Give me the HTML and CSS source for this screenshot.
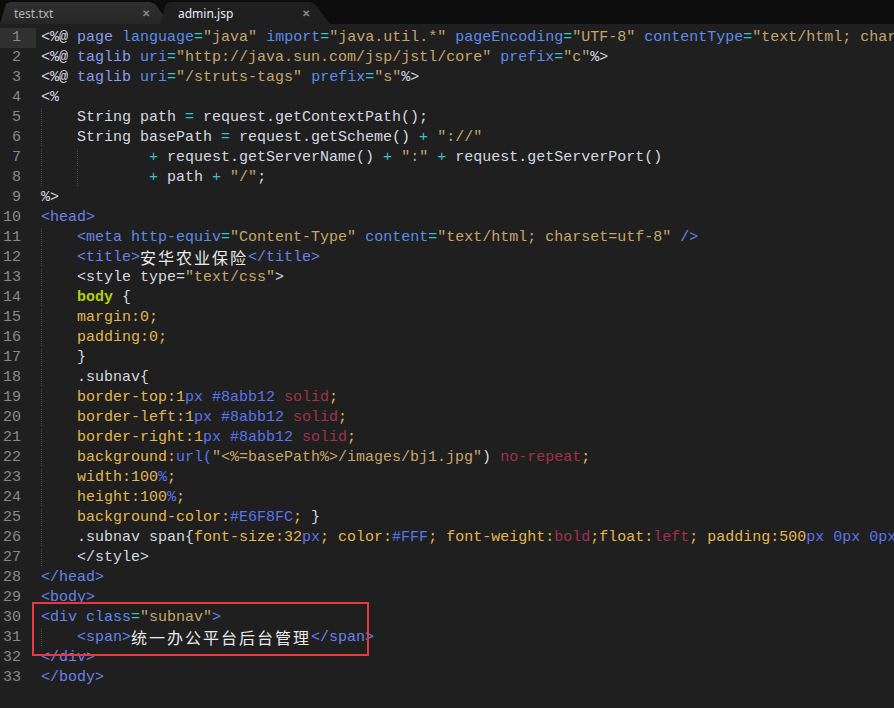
FILE: index.html
```html
<!DOCTYPE html>
<html lang="zh">
<head>
    <meta charset="UTF-8">
    <title>admin.jsp</title>
    <link rel="stylesheet" href="styles.css">
</head>
<body>

    <div class="tabbar">
        <div class="tab">
            <span class="tab-name">test.txt</span>
            <span class="tab-close">&#x2715;</span>
        </div>
        <div class="tab active">
            <span class="tab-name">admin.jsp</span>
            <span class="tab-close">&#x2715;</span>
        </div>
    </div>

    <div class="editor">
        <div class="line current"><span class="num">1</span><span class="code"><span class="p">&lt;%@</span> <span class="kw">page</span> <span class="at">language</span><span class="eq">=</span><span class="st">"java"</span> <span class="at">import</span><span class="eq">=</span><span class="st">"java.util.*"</span> <span class="at">pageEncoding</span><span class="eq">=</span><span class="st">"UTF-8"</span> <span class="at">contentType</span><span class="eq">=</span><span class="st">"text/html; charset=utf-8"</span><span class="p">%&gt;</span></span></div>
        <div class="line"><span class="num">2</span><span class="code"><span class="p">&lt;%@</span> <span class="kw">taglib</span> <span class="at">uri</span><span class="eq">=</span><span class="st">"http://java.sun.com/jsp/jstl/core"</span> <span class="at">prefix</span><span class="eq">=</span><span class="st">"c"</span><span class="p">%&gt;</span></span></div>
        <div class="line"><span class="num">3</span><span class="code"><span class="p">&lt;%@</span> <span class="kw">taglib</span> <span class="at">uri</span><span class="eq">=</span><span class="st">"/struts-tags"</span> <span class="at">prefix</span><span class="eq">=</span><span class="st">"s"</span><span class="p">%&gt;</span></span></div>
        <div class="line"><span class="num">4</span><span class="code"><span class="p">&lt;%</span></span></div>
        <div class="line"><span class="num">5</span><span class="code"><span class="ig">    </span><span class="p">String path </span><span class="eq">=</span><span class="p"> request.getContextPath();</span></span></div>
        <div class="line"><span class="num">6</span><span class="code"><span class="ig">    </span><span class="p">String basePath </span><span class="eq">=</span><span class="p"> request.getScheme() </span><span class="eq">+</span> <span class="st">"://"</span></span></div>
        <div class="line"><span class="num">7</span><span class="code"><span class="ig">    </span><span class="ig">    </span>    <span class="eq">+</span><span class="p"> request.getServerName() </span><span class="eq">+</span> <span class="st">":"</span> <span class="eq">+</span><span class="p"> request.getServerPort()</span></span></div>
        <div class="line"><span class="num">8</span><span class="code"><span class="ig">    </span><span class="ig">    </span>    <span class="eq">+</span><span class="p"> path </span><span class="eq">+</span> <span class="st">"/"</span><span class="p">;</span></span></div>
        <div class="line"><span class="num">9</span><span class="code"><span class="p">%&gt;</span></span></div>
        <div class="line"><span class="num">10</span><span class="code"><span class="tg">&lt;head&gt;</span></span></div>
        <div class="line"><span class="num">11</span><span class="code"><span class="ig">    </span><span class="tg">&lt;meta</span> <span class="at">http-equiv</span><span class="eq">=</span><span class="st">"Content-Type"</span> <span class="at">content</span><span class="eq">=</span><span class="st">"text/html; charset=utf-8"</span> <span class="tg">/&gt;</span></span></div>
        <div class="line"><span class="num">12</span><span class="code"><span class="ig">    </span><span class="tg">&lt;title&gt;</span><span class="cn">安华农业保险</span><span class="tg">&lt;/title&gt;</span></span></div>
        <div class="line"><span class="num">13</span><span class="code"><span class="ig">    </span><span class="p">&lt;style type=</span><span class="st">"text/css"</span><span class="p">&gt;</span></span></div>
        <div class="line"><span class="num">14</span><span class="code"><span class="ig">    </span><span class="sel">body</span> <span class="p">{</span></span></div>
        <div class="line"><span class="num">15</span><span class="code"><span class="ig">    </span><span class="pr">margin:0;</span></span></div>
        <div class="line"><span class="num">16</span><span class="code"><span class="ig">    </span><span class="pr">padding:0;</span></span></div>
        <div class="line"><span class="num">17</span><span class="code"><span class="ig">    </span><span class="p">}</span></span></div>
        <div class="line"><span class="num">18</span><span class="code"><span class="ig">    </span><span class="p">.subnav{</span></span></div>
        <div class="line"><span class="num">19</span><span class="code"><span class="ig">    </span><span class="pr">border-top:1</span><span class="un">px #8abb12</span> <span class="cv">solid</span><span class="pr">;</span></span></div>
        <div class="line"><span class="num">20</span><span class="code"><span class="ig">    </span><span class="pr">border-left:1</span><span class="un">px #8abb12</span> <span class="cv">solid</span><span class="pr">;</span></span></div>
        <div class="line"><span class="num">21</span><span class="code"><span class="ig">    </span><span class="pr">border-right:1</span><span class="un">px #8abb12</span> <span class="cv">solid</span><span class="pr">;</span></span></div>
        <div class="line"><span class="num">22</span><span class="code"><span class="ig">    </span><span class="pr">background:</span><span class="un">url(</span><span class="st">"&lt;%=basePath%&gt;/images/bj1.jpg"</span><span class="p">)</span> <span class="cv">no-repeat</span><span class="pr">;</span></span></div>
        <div class="line"><span class="num">23</span><span class="code"><span class="ig">    </span><span class="pr">width:100</span><span class="un">%</span><span class="pr">;</span></span></div>
        <div class="line"><span class="num">24</span><span class="code"><span class="ig">    </span><span class="pr">height:100</span><span class="un">%</span><span class="pr">;</span></span></div>
        <div class="line"><span class="num">25</span><span class="code"><span class="ig">    </span><span class="pr">background-color:</span><span class="un">#E6F8FC</span><span class="pr">;</span> <span class="p">}</span></span></div>
        <div class="line"><span class="num">26</span><span class="code"><span class="ig">    </span><span class="p">.subnav span{</span><span class="pr">font-size:32</span><span class="un">px</span><span class="pr">; color:</span><span class="un">#FFF</span><span class="pr">; font-weight:</span><span class="cv">bold</span><span class="pr">;float:</span><span class="cv">left</span><span class="pr">; padding:500</span><span class="un">px 0px 0px 40px</span><span class="pr">;</span></span></div>
        <div class="line"><span class="num">27</span><span class="code"><span class="ig">    </span><span class="p">&lt;/style&gt;</span></span></div>
        <div class="line"><span class="num">28</span><span class="code"><span class="tg">&lt;/head&gt;</span></span></div>
        <div class="line"><span class="num">29</span><span class="code"><span class="tg">&lt;body&gt;</span></span></div>
        <div class="line"><span class="num">30</span><span class="code"><span class="tg">&lt;div</span> <span class="at">class</span><span class="eq">=</span><span class="st">"subnav"</span><span class="tg">&gt;</span></span></div>
        <div class="line"><span class="num">31</span><span class="code"><span class="ig">    </span><span class="tg">&lt;span&gt;</span><span class="cn">统一办公平台后台管理</span><span class="tg">&lt;/span&gt;</span></span></div>
        <div class="line"><span class="num">32</span><span class="code"><span class="tg">&lt;/div&gt;</span></span></div>
        <div class="line"><span class="num">33</span><span class="code"><span class="tg">&lt;/body&gt;</span></span></div>

        <!-- annotation box drawn over lines 30-31 -->
        <div class="mark"></div>
    </div>

</body>
</html>
```

FILE: styles.css
```css
/* Base */
* {
    margin: 0;
    padding: 0;
    box-sizing: border-box;
}

body {
    width: 894px;
    height: 708px;
    overflow: hidden;
    background: #1f1f1f;
    font-family: "Liberation Mono", "DejaVu Sans Mono", "Noto Sans CJK SC", monospace;
}

/* Tab bar */
.tabbar {
    display: flex;
    height: 26px;
    padding-top: 2px;
    background: #0c0c0c;
    border-bottom: 2px solid #1f1f1f;
}

.tab {
    display: flex;
    align-items: center;
    justify-content: space-between;
    width: 172px;
    height: 22px;
    margin-right: -12px;
    padding: 0 22px 0 14px;
    background: linear-gradient(#303030, #262626);
    clip-path: polygon(0 100%, 6px 2px, 10px 0, 150px 0, 155px 2px, 170px 100%);
    font-family: "Noto Sans", "Open Sans", sans-serif;
    font-size: 12px;
    color: #b4b4b4;
}

.tab.active {
    padding-left: 18px;
    background: #1f1f1f;
    color: #e8eefc;
}

.tab-close {
    font-size: 10px;
    font-weight: bold;
    color: #8a8a8a;
}

/* Editor */
.editor {
    position: relative;
    padding-top: 2px;
}

.line {
    display: flex;
    height: 20px;
    line-height: 20px;
    font-size: 15px;
    white-space: pre;
}

.num {
    width: 36px;
    flex-shrink: 0;
    padding-right: 15px;
    text-align: right;
    color: #8a8a8a;
}

.current .num {
    background: #303030;
}

.code {
    padding-left: 5px;
    overflow: hidden;
    color: #d8d8d8;
}

/* dotted indent guides */
.ig {
    background: repeating-linear-gradient(to bottom, #4c4c4c 0 1px, transparent 1px 2px) no-repeat left top / 1px 100%;
}

/* Syntax colours */
.p   { color: #d6d9e0; }
.kw  { color: #8a9cf0; }
.at  { color: #5c8ceb; }
.eq  { color: #3cc2cc; }
.st  { color: #c6a66c; }
.tg  { color: #6a82ea; }
.sel { color: #b2d10e; font-weight: bold; }
.pr  { color: #e2b752; }
.un  { color: #5a74ec; }
.cv  { color: #a3304e; }

.cn {
    display: inline-block;
    height: 20px;
    vertical-align: top;
    line-height: 18px;
    font-family: "Noto Sans CJK SC", sans-serif;
    font-size: 16px;
    letter-spacing: 2px;
    color: #eaeaea;
}

/* Red annotation */
.mark {
    position: absolute;
    left: 32px;
    top: 576px;
    width: 337px;
    height: 54px;
    border: 2px solid #e83a3e;
}
```
